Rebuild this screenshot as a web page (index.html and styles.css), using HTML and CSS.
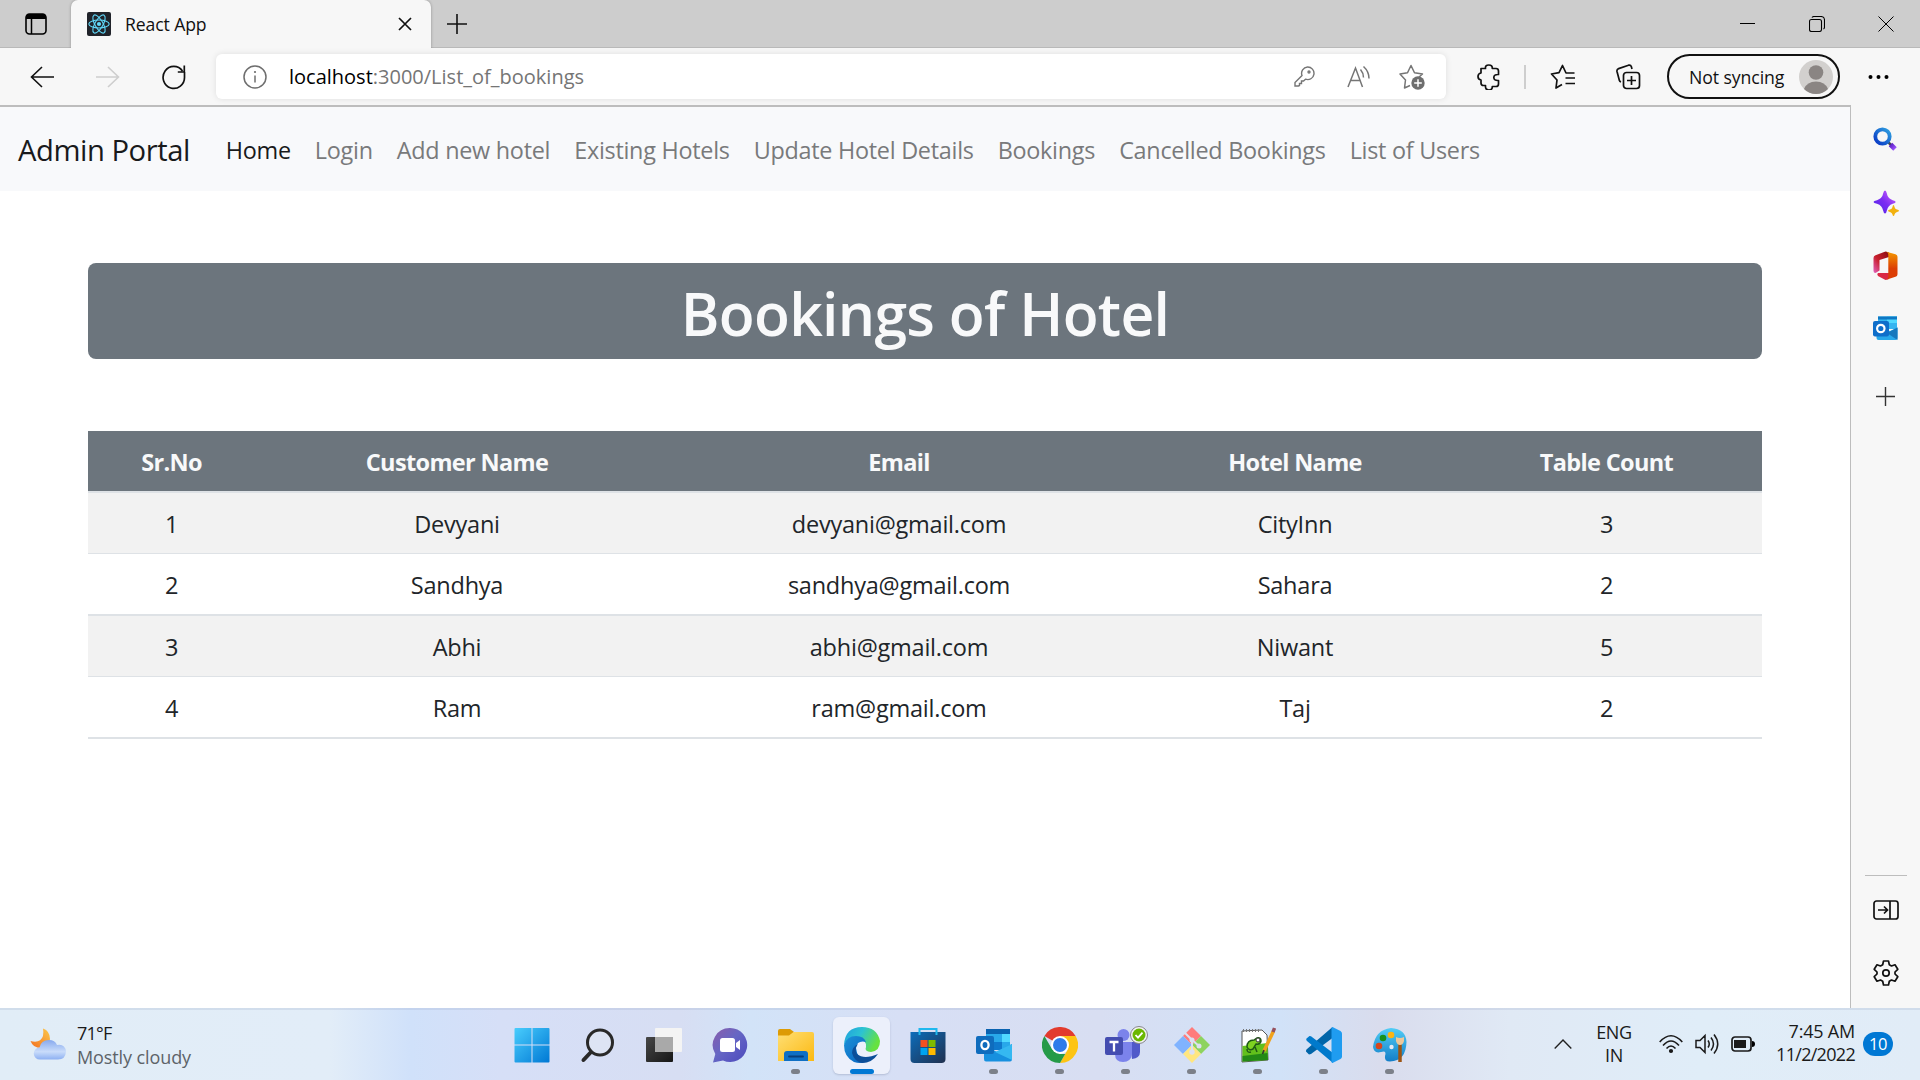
FILE: index.html
```html
<!DOCTYPE html>
<html lang="en">
<head>
<meta charset="utf-8">
<title>React App</title>
<link rel="stylesheet" href="styles.css">
</head>
<body>
<div class="screen">
  <header class="tabstrip">
    <svg class="tab-actions" width="22" height="22" viewBox="0 0 22 22"><rect x="1" y="1" width="20" height="20" rx="3.5" fill="none" stroke="#000" stroke-width="1.6"/><path d="M1 6V4a3 3 0 0 1 3-3h14a3 3 0 0 1 3 3v2z"/><path d="M6.5 6v15" stroke="#000" stroke-width="1.5"/></svg>
    <div class="tab">
      <svg width="24" height="24" viewBox="0 0 24 24"><rect width="24" height="24" rx="2" fill="#20232a"/><g fill="none" stroke="#61dafb" stroke-width="1.1"><ellipse cx="12" cy="12" rx="10.2" ry="4"/><ellipse cx="12" cy="12" rx="10.2" ry="4" transform="rotate(60 12 12)"/><ellipse cx="12" cy="12" rx="10.2" ry="4" transform="rotate(120 12 12)"/></g><circle cx="12" cy="12" r="2.1" fill="#61dafb"/></svg>
      <span class="tab-title">React App</span>
      <svg class="tab-close" width="14" height="14" viewBox="0 0 14 14"><path d="M1 1l12 12M13 1L1 13" stroke="#111" stroke-width="1.7"/></svg>
    </div>
    <svg class="new-tab" width="22" height="22" viewBox="0 0 22 22"><path d="M11 1v20M1 11h20" stroke="#111" stroke-width="1.6"/></svg>
    <div class="window-controls">
      <svg width="16" height="16" viewBox="0 0 16 16"><path d="M0 7.5h15" stroke="#000"/></svg>
      <svg width="16" height="16" viewBox="0 0 16 16"><rect x=".5" y="3.5" width="12" height="12" rx="2" fill="none" stroke="#000" stroke-width="1.1"/><path d="M3 1.5Q3.5.5 5 .5h7q3.500 0 3.500 3.500v7q0 1.500-1 2" fill="none" stroke="#000" stroke-width="1.1"/></svg>
      <svg width="16" height="16" viewBox="0 0 16 16"><path d="M.5.5l15 15M15.500.500l-15 15" stroke="#000"/></svg>
    </div>
  </header>

  <div class="toolbar">
    <svg class="back" width="24" height="24" viewBox="0 0 24 24"><path d="M24 12H1.500M12 2L1.500 12 12 22" fill="none" stroke="#111" stroke-width="1.600"/></svg>
    <svg class="forward" width="24" height="24" viewBox="0 0 24 24"><path d="M0 12h22.500M12 2l10.500 10L12 22" fill="none" stroke="#cecece" stroke-width="1.600"/></svg>
    <svg class="reload" width="24" height="26" viewBox="0 0 24 26"><path d="M22.500 8v5A10.700 11 0 1 1 20.500 7M22.300 1.500v6.500h-6.500" fill="none" stroke="#111" stroke-width="1.700"/></svg>
    <div class="address">
      <svg width="24" height="24" viewBox="0 0 24 24"><circle cx="12" cy="12" r="11" fill="none" stroke="#6e6e6e" stroke-width="1.500"/><path d="M12 10.500v7" stroke="#6e6e6e" stroke-width="1.500"/><circle cx="12" cy="7" r="1.100" fill="#6e6e6e"/></svg>
      <span class="url"><b>localhost</b>:3000/List_of_bookings</span>
      <svg class="key" width="21" height="21" viewBox="0 0 21 21" fill="none" stroke="#757575" stroke-width="1.400"><path d="M13.500 1a6.300 6.300 0 1 1-2 12.200L9.500 15H7.500v2.500H5.500V19.500L4.500 20H1v-3.500l7-7A6.300 6.300 0 0 1 13.500 1z"/><circle cx="15" cy="6" r="1"/></svg>
      <svg class="read" width="24" height="24" viewBox="0 0 24 24" fill="none" stroke="#757575" stroke-width="1.500"><path d="M1 22L8.500 3l7 19M3.500 15.500h10M13.500 4.500q3 3.500 3 8M16.500 1.500q5.500 5 5.500 12"/></svg>
      <svg class="addfav" width="26" height="26" viewBox="0 0 26 26"><path d="M11 21.500L5.500 24l1-8L1 10l7.500-1.200L12 1.500l3.500 7.300L23.500 10 20 13" fill="none" stroke="#757575" stroke-width="1.500" stroke-linejoin="round"/><circle cx="19" cy="19" r="6.700" fill="#6e6e6e"/><path d="M19 15.200v7.600M15.200 19h7.600" stroke="#fff" stroke-width="1.500"/></svg>
    </div>
    <svg class="puzzle" width="24" height="26" viewBox="0 0 24 26"><path d="M4 4.500h4.500Q8 1 11.800 1t3.500 3.500H19q2.500 0 2.500 2.500v3.500q-4.700-.3-4.700 3t4.700 3v3.500q0 2.500-2.500 2.500h-3.700q.2 3.500-3.500 3.500T8.500 21.500H6.500Q4 21.500 4 19v-3Q1 15.500 1 12.500T4 9z" fill="none" stroke="#111" stroke-width="1.700" stroke-linejoin="round"/></svg>
    <i class="separator"></i>
    <svg class="favs" width="26" height="26" viewBox="0 0 26 26"><path d="M12 20.500L6 24l1-8L1.500 10 9 8.700l3.500-7.200L16 9h8.500M15.500 14H25M15.500 19.500H25M25 9" fill="none" stroke="#111" stroke-width="1.700" stroke-linejoin="round"/></svg>
    <svg class="collections" width="25" height="26" viewBox="0 0 25 26" fill="none" stroke="#111" stroke-width="1.700"><path d="M5 18q-1.300-.4-1.600-1.500L1 7.500Q.6 5.300 2.600 4.600L12.500 1.200q2.200-.5 2.800 1.400l.7 2.400"/><rect x="7.500" y="8.500" width="16" height="16" rx="3"/><path d="M15.500 12v9M11 16.500h9"/></svg>
    <div class="profile"><span>Not syncing</span>
      <svg width="34" height="34" viewBox="0 0 34 34"><circle cx="17" cy="17" r="17" fill="#d2d0ce"/><circle cx="17" cy="12.500" r="7.300" fill="#8a8583"/><path d="M5 29Q8 21.500 17 21.500T29 29Q24 34 17 34T5 29z" fill="#8a8583"/></svg>
    </div>
    <svg class="more" width="21" height="6" viewBox="0 0 21 6"><circle cx="2.500" cy="3" r="2"/><circle cx="10.500" cy="3" r="2"/><circle cx="18.500" cy="3" r="2"/></svg>
  </div>

  <div class="workspace">
    <main class="page">
      <nav class="navbar">
        <a class="brand">Admin Portal</a>
        <a class="active">Home</a><a>Login</a><a>Add new hotel</a><a>Existing Hotels</a><a>Update Hotel Details</a><a>Bookings</a><a>Cancelled Bookings</a><a>List of Users</a>
      </nav>
      <section class="container">
        <h1>Bookings of Hotel</h1>
        <table>
          <colgroup><col class="c1"><col class="c2"><col class="c3"><col class="c4"><col class="c5"></colgroup>
          <thead><tr><th>Sr.No</th><th>Customer Name</th><th>Email</th><th>Hotel Name</th><th>Table Count</th></tr></thead>
          <tbody>
            <tr><td>1</td><td>Devyani</td><td>devyani@gmail.com</td><td>CityInn</td><td>3</td></tr>
            <tr><td>2</td><td>Sandhya</td><td>sandhya@gmail.com</td><td>Sahara</td><td>2</td></tr>
            <tr><td>3</td><td>Abhi</td><td>abhi@gmail.com</td><td>Niwant</td><td>5</td></tr>
            <tr><td>4</td><td>Ram</td><td>ram@gmail.com</td><td>Taj</td><td>2</td></tr>
          </tbody>
        </table>
      </section>
    </main>
    <aside class="sidebar">
      <div class="slot"><svg width="25" height="25" viewBox="0 0 25 25"><defs><linearGradient id="lens" x1="0" y1="1" x2="1" y2="0"><stop offset="0" stop-color="#0836c4"/><stop offset="1" stop-color="#2fa0e0"/></linearGradient><linearGradient id="handle" x1="0" y1="0" x2="1" y2="1"><stop offset="0" stop-color="#5a1fc0"/><stop offset="1" stop-color="#9d55ff"/></linearGradient></defs><path d="M15 15l3 3" stroke="#424a55" stroke-width="2.500"/><path d="M17.500 17.500l4.500 4.500" stroke="url(#handle)" stroke-width="5"/><circle cx="9.500" cy="9.500" r="7.200" fill="none" stroke="url(#lens)" stroke-width="3.800"/></svg></div>
      <div class="slot"><svg width="26" height="26" viewBox="0 0 26 26"><defs><linearGradient id="spark" x1="0" y1="1" x2="1" y2="0"><stop offset="0" stop-color="#4a25e8"/><stop offset=".5" stop-color="#7c2cf2"/><stop offset="1" stop-color="#d667ff"/></linearGradient></defs><path d="M12 .5q1.200 0 1.700 2.500 1 5.500 6 7.200 3 .8 3 1.800t-3 1.800q-5 1.700-6 7.200-.5 2.500-1.700 2.500t-1.700-2.500q-1-5.500-6.300-7.200Q.5 13 .5 12t3.500-1.800Q9.300 8.500 10.300 3 10.800.5 12 .5z" fill="url(#spark)"/><path d="M20.500 15q.7 0 1 2 .5 2 2.500 2.500 2 .4 2 1.200t-2 1.300q-2 .5-2.500 2.500-.3 1.500-1 1.500t-1-1.500q-.5-2-2.500-2.500-2-.500-2-1.300t2-1.200q2-.5 2.500-2.500.3-2 1-2z" fill="#f2b10f"/></svg></div>
      <div class="slot"><svg width="25" height="29" viewBox="0 0 25 29"><defs><linearGradient id="of1" x1="0" y1="1" x2="1" y2="0"><stop offset="0" stop-color="#e263c0"/><stop offset=".45" stop-color="#c8202c"/><stop offset="1" stop-color="#870c10"/></linearGradient><linearGradient id="of2" x1="0" y1="0" x2="0" y2="1"><stop offset="0" stop-color="#f59a00"/><stop offset=".6" stop-color="#dc3e05"/></linearGradient></defs><path d="M12.500.5L16 1.500V6L6.500 9v10.500L2.500 22Q.5 22 .5 20V7q0-2 2-2.800z" fill="url(#of1)"/><path d="M5 22h11v6l-3.500 1L5 25Q3.500 23 5 22z" fill="#d92a45"/><path d="M12.500.500l10 2.800q2 .7 2 2.500v17.500q0 2-2 2.500L12.500 29q2.800-1 2.800-3V3Q15.300 1 12.500.500z" fill="url(#of2)"/></svg></div>
      <div class="slot"><svg width="25" height="25" viewBox="0 0 25 25"><path d="M5 .5h19V13H5z" fill="#35b5f0"/><path d="M14 .5h10V7H14z" fill="#50d9ff"/><path d="M5 .5h19v3H5z" fill="#0f78c4"/><path d="M3.500 12L17 15l7.500-3.500V22q0 2-2 2H5.500q-2 0-2-2z" fill="#28a8ea"/><path d="M14 17l10.500-5.500V24z" fill="#1678bd"/><rect x="0" y="5" width="16" height="15.500" rx="2" fill="#0f6fca"/><circle cx="7.800" cy="12.500" r="3.700" fill="none" stroke="#fff" stroke-width="2.200"/></svg></div>
      <div class="slot add"><svg width="19" height="19" viewBox="0 0 19 19"><path d="M9.500 0v19M0 9.500h19" stroke="#333" stroke-width="1.400"/></svg></div>
      <hr>
      <div class="slot"><svg width="26" height="20" viewBox="0 0 26 20" fill="none" stroke="#111" stroke-width="1.700"><rect x="1" y="1" width="24" height="18" rx="2.500"/><path d="M17 1v18M5 10h9M11 6.500l3.500 3.500-3.500 3.500"/></svg></div>
      <div class="slot"><svg width="26" height="26" viewBox="0 0 26 26" fill="none" stroke="#111" stroke-width="1.700" stroke-linejoin="round"><path d="M10.500 1h5l.8 3.800 2.200 1.200L22 4.800l2.800 4.500L22 12v2l2.800 2.700L22 21.200 18.500 20l-2.200 1.200-.8 3.800h-5l-.8-3.800L7.500 20 4 21.200l-2.800-4.500L4 14v-2L1.200 9.300 4 4.800 7.500 6l2.200-1.200z"/><circle cx="13" cy="13" r="3.200"/></svg></div>
    </aside>
  </div>

  <footer class="taskbar">
    <div class="weather">
      <svg width="36" height="32" viewBox="0 0 36 32"><defs><linearGradient id="moon" x1="0" y1="1" x2="1" y2="0"><stop offset="0" stop-color="#f37021"/><stop offset="1" stop-color="#fbc94a"/></linearGradient><linearGradient id="cloud" x1="0" y1="0" x2="0" y2="1"><stop offset="0" stop-color="#87a9ee"/><stop offset=".6" stop-color="#c9dcfa"/><stop offset="1" stop-color="#8db0f2"/></linearGradient></defs><path d="M13 .5Q20 3 20 11q-.5 8-9 9Q3 20 .5 13q10 2.500 12.500-5 .8-3.500 0-7.500z" fill="url(#moon)"/><path d="M10 31.500a6 6 0 0 1-.5-12Q11 12 19 12q6 0 8 5 8-1.500 9 6.500-.5 8-8 8z" fill="url(#cloud)"/></svg>
      <div class="weather-text"><span class="temp">71°F</span><span class="sky">Mostly cloudy</span></div>
    </div>
    <div class="apps">
      <div class="app"><svg width="36" height="36" viewBox="0 0 36 36"><defs><linearGradient id="win" x1="0" y1="0" x2="1" y2="1" gradientUnits="objectBoundingBox"><stop offset="0" stop-color="#49cdfd"/><stop offset="1" stop-color="#0078d4"/></linearGradient></defs><path d="M1.500 1H17.500V17.500H.500V2q0-1 1-1zM18.500 1h16q1 0 1 1v15.500h-17zM.500 18.500h17V35.500h-16q-1 0-1-1zM18.500 18.500h17v16q0 1-1 1h-16z" fill="url(#win)"/></svg></div>
      <div class="app"><svg width="36" height="36" viewBox="0 0 36 36" fill="none" stroke="#292929"><path d="M12 24L3.500 33" stroke-width="4" stroke-linecap="round"/><circle cx="20" cy="15.500" r="12.500" fill="#dde4f4" stroke-width="3"/></svg></div>
      <div class="app"><svg width="36" height="36" viewBox="0 0 36 36"><defs><linearGradient id="tv" x1="0" y1="0" x2="1" y2="1"><stop offset="0" stop-color="#474747"/><stop offset="1" stop-color="#161616"/></linearGradient></defs><rect x="0" y="10" width="27" height="25" rx="1" fill="url(#tv)"/><rect x="9" y="1" width="27" height="24" rx="1" fill="#f4f4f4"/><path d="M9 10h18v15H9z" fill="#a9a9a9"/></svg></div>
      <div class="app"><svg width="36" height="36" viewBox="0 0 36 36"><defs><linearGradient id="chat" x1="0" y1="0" x2="1" y2="1"><stop offset="0" stop-color="#8a5cab"/><stop offset=".45" stop-color="#6667c4"/><stop offset=".7" stop-color="#5a58c2"/><stop offset="1" stop-color="#4b4cb8"/></linearGradient></defs><path d="M18 1a17 17 0 1 1-7 32.400L1 35.500l2.300-8.500A17 17 0 0 1 18 1z" fill="url(#chat)"/><rect x="8" y="11" width="15" height="14" rx="2.500" fill="#fff"/><path d="M24 16l4-3v10l-4-3z" fill="#fff"/></svg></div>
      <div class="app run"><svg width="36" height="36" viewBox="0 0 36 36"><defs><linearGradient id="fold" x1="0" y1="0" x2="1" y2="1"><stop offset="0" stop-color="#ffdf75"/><stop offset="1" stop-color="#fbb912"/></linearGradient></defs><path d="M0 4q0-2 2-2h10l4 3v5H0z" fill="#dd9b05"/><path d="M0 8.500h11L15.500 5H34q2 0 2 2v27H0z" fill="url(#fold)"/><path d="M6 34v-7q0-3 3-3h18q3 0 3 3v7z" fill="#0f6fc4"/><path d="M11 29.500h14" stroke="#083f7b" stroke-width="1.800" stroke-linecap="round"/></svg></div>
      <div class="app run current"><svg width="36" height="36" viewBox="0 0 36 36"><defs><linearGradient id="e1" x1="0" y1="0" x2="1" y2=".4"><stop offset="0" stop-color="#1f9fe0"/><stop offset=".5" stop-color="#2cc3d2"/><stop offset="1" stop-color="#66e240"/></linearGradient><linearGradient id="e2" x1="0" y1="0" x2="1" y2="1"><stop offset="0" stop-color="#1b91d8"/><stop offset="1" stop-color="#0b64c0"/></linearGradient></defs><path d="M0 18Q1 0 18 0q15 0 18 14 0 10-9 11-7-.500-5-5 1-7-8-8Q3 11 0 18z" fill="url(#e1)"/><path d="M0 18Q3 9 12 9q8 0 10 6-9-2-10 6 1 10 10 14-6 2-12 0Q0 30 0 18z" fill="url(#e2)"/><path d="M14 17q-4 5-1 10 7 6 21 0-6 9-16 9-8-2-10-10 0-6 6-9z" fill="#0d4f99"/></svg></div>
      <div class="app"><svg width="36" height="36" viewBox="0 0 36 36"><defs><linearGradient id="store" x1="0" y1="0" x2="1" y2="1"><stop offset="0" stop-color="#0c6dbb"/><stop offset="1" stop-color="#20304f"/></linearGradient></defs><path d="M.500 5h35v27q0 4-4 4h-27q-4 0-4-4z" fill="url(#store)"/><path d="M9.500 8V2h17v6" fill="none" stroke="#1fb8ee" stroke-width="2"/><path d="M10.500 13h7v7h-7z" fill="#f25022"/><path d="M18.500 13h7v7h-7z" fill="#7fba00"/><path d="M10.500 21h7v7h-7z" fill="#00a4ef"/><path d="M18.500 21h7v7h-7z" fill="#ffb900"/></svg></div>
      <div class="app run"><svg width="36" height="36" viewBox="0 0 36 36"><path d="M10 4q0-2 2-2h20q2 0 2 2v18H10z" fill="#28a8ea"/><path d="M10 2h24v5H10z" fill="#0a62b0"/><path d="M26 7h8v8h-8z" fill="#50d9ff"/><path d="M18 15h8v8h-8z" fill="#0f78cc"/><path d="M8 18l13 7 15-8v15q0 2.500-2 2.500H10q-2 0-2-2.500z" fill="#1790df"/><path d="M36 17v16L19 25z" fill="#35b8f1"/><rect y="9" width="18" height="18" rx="2" fill="#0f6cbd"/><ellipse cx="9" cy="18" rx="3.600" ry="4.200" fill="none" stroke="#fff" stroke-width="2.300"/></svg></div>
      <div class="app run"><svg width="36" height="36" viewBox="0 0 36 36"><path d="M18 18L2.400 9A18 18 0 0 1 33.600 9z" fill="#e23b2e"/><path d="M18 9h15.600A18 18 0 0 1 18 36l7.800-13.500z" fill="#fdc413"/><path d="M2.400 9l7.800 13.500L18 27h5.200L18 36A18 18 0 0 1 2.400 9z" fill="#259a48"/><circle cx="18" cy="18" r="9" fill="#fff"/><circle cx="18" cy="18" r="7" fill="#2f7bea"/></svg></div>
      <div class="app run"><svg width="44" height="38" viewBox="0 0 44 38"><circle cx="19.500" cy="9" r="6" fill="#7b83eb"/><circle cx="32" cy="11" r="5" fill="#5059c9"/><path d="M26 16h10v10q0 6-8 7z" fill="#5059c9"/><path d="M11 16h17v12q-1 8-9 8t-8-8z" fill="#7b83eb"/><rect x="1" y="11" width="18" height="18" rx="2" fill="#444db0"/><path d="M5.500 16h9M10 16v9.500" stroke="#fff" stroke-width="2.300"/><circle cx="35" cy="9" r="8.500" fill="#f3f3f3" stroke="#85858a"/><circle cx="35" cy="9" r="6.500" fill="#6bb700"/><path d="M31.500 9l2.500 2.600 4.500-5" fill="none" stroke="#fff" stroke-width="1.800"/></svg></div>
      <div class="app run"><svg width="36" height="36" viewBox="0 0 36 36"><path d="M18 0l9 9-9 9-9-9z" fill="#ff7b7b"/><path d="M9 9l9 9-9 9-9-9z" fill="#80b3ff"/><path d="M27 9l9 9-9 9-9-9z" fill="#8dd35f"/><path d="M18 18l9 9-9 9-9-9z" fill="#ffe680"/><path d="M11 6l7 7v12M18 13l7 6" fill="none" stroke="#dce1f2" stroke-width="2"/><circle cx="18" cy="13" r="2.500" fill="#dce1f2"/><circle cx="25" cy="19" r="2.500" fill="#dce1f2"/><circle cx="18" cy="25" r="2.700" fill="#dce1f2"/></svg></div>
      <div class="app run"><svg width="36" height="36" viewBox="0 0 36 36"><path d="M2 4l20-1 5 5 1 25-26 2z" fill="#fff" stroke="#555"/><path d="M2.500 19l25-3 .5 17-25.500 1.500z" fill="#62c01c"/><path d="M2.500 29l25-3 .5 7-25.500 1.500z" fill="#238a16"/><path d="M3 3.500h18" stroke="#777" stroke-width="3" stroke-dasharray="1 2"/><path d="M7 20q0-7 7-7l3-2q4-1 4 3-1 4-5 3l-3 5q-4 2-6-2zM11 25q-4 1-4-3M15 20l2 5" fill="#7ed321" stroke="#1f5b16" stroke-width="1.500"/><circle cx="18" cy="13" r="2" fill="#fff" stroke="#333"/><path d="M33.500 4L24 24" stroke="#f0a21c" stroke-width="3.500"/><path d="M34.500 1L33 5" stroke="#96505c" stroke-width="3.500"/><path d="M24 23l-1.500 4" stroke="#333" stroke-width="1.500"/></svg></div>
      <div class="app run"><svg width="36" height="36" viewBox="0 0 36 36"><path d="M26.500 0v11L5 27l-2 .5-3-3Q-.2 23 1 22z" fill="#0065a9"/><path d="M1 14q-1.200-1-.500-2.500L3.500 9 5 9.300 27 26v10z" fill="#007acc"/><path d="M26.500 0L34.500 4Q36 5 36 6.500v23q0 1.500-1.500 2.500l-8 4q-1 0-1-1.500v-33q0-1.500 1-1.500z" fill="#1f9cf0"/></svg></div>
      <div class="app run"><svg width="36" height="36" viewBox="0 0 36 36"><defs><linearGradient id="pal" x1="0" y1="0" x2="0" y2="1"><stop offset="0" stop-color="#52cdf6"/><stop offset="1" stop-color="#137ec8"/></linearGradient></defs><path d="M19 1q15 1 15.500 14Q34 34 18 34.500q-6 0-5-5.500 2-6-4-4-7 2-8-5Q3 3 19 1z" fill="url(#pal)"/><circle cx="11" cy="11" r="3.300" fill="#16911d"/><circle cx="19" cy="8" r="3.300" fill="#fcb514"/><circle cx="7" cy="19" r="3.300" fill="#d6451b"/><circle cx="19.500" cy="20" r="2.200" fill="#e4ebf6"/><path d="M28 15v20" stroke="#9c5413" stroke-width="3.500"/><path d="M24 10q4 2 8 0v4q-1 4-4 4t-4-4z" fill="#ecc89c"/></svg></div>
    </div>
    <div class="tray">
      <svg class="chevron" width="18" height="12" viewBox="0 0 18 12"><path d="M.7 10.500L9 2l8.300 8.500" fill="none" stroke="#222" stroke-width="1.400"/></svg>
      <div class="lang"><span>ENG</span><span>IN</span></div>
      <svg class="wifi" width="24" height="20" viewBox="0 0 24 20" fill="none" stroke="#1a1a1a" stroke-width="1.600"><path d="M.7 8q11.300-12.500 22.600 0M4 11.500q8-9 16 0M7.500 14.500q4.500-5 9 0"/><circle cx="12" cy="17" r="1.300" fill="#1a1a1a"/></svg>
      <svg class="speaker" width="24" height="22" viewBox="0 0 24 22" fill="none" stroke="#1a1a1a" stroke-width="1.500"><path d="M1 7.500h4l5-5v17l-5-5H1zM13 7.500q2.500 3.500 0 7M16 4.500q5 6.500 0 13M19 1.500q7.500 9.500 0 19"/></svg>
      <svg class="battery" width="24" height="16" viewBox="0 0 24 16"><rect x="1" y="1" width="19" height="14" rx="3" fill="none" stroke="#1a1a1a" stroke-width="1.700"/><rect x="3" y="4" width="12" height="8" fill="#1a1a1a"/><path d="M21 5q3 0 3 3t-3 3z"/></svg>
      <div class="clock"><span>7:45 AM</span><span class="date">11/2/2022</span></div>
      <span class="badge">10</span>
    </div>
  </footer>
</div>
</body>
</html>
```
FILE: styles.css
```css
* { box-sizing: border-box; }
body { margin: 0; font-family: "Open Sans", "Noto Sans", sans-serif; color: #212529; }
svg { display: block; flex: none; }
.screen { width: 1920px; height: 1080px; display: flex; flex-direction: column; overflow: hidden; background: #fff; }

/* browser chrome */
.tabstrip { height: 48px; flex: none; display: flex; align-items: center; background: #cdcdcd; box-shadow: inset 0 -1px 0 #b9b9b9; }
.tab-actions { margin-left: 25px; }
.tab { display: flex; align-items: center; width: 360px; height: 48px; margin-left: 24px; padding: 0 19px 0 16px; background: #f7f7f7; border-radius: 7px 7px 0 0; box-shadow: 0 0 3px rgba(0, 0, 0, .3); clip-path: inset(0 -4px 0 -4px); }
.tab-title { margin-left: 14px; font-size: 17.600px; letter-spacing: -.1px; color: #111; }
.tab-close { margin-left: auto; }
.new-tab { margin-left: 15px; margin-bottom: 1px; }
.window-controls { display: flex; gap: 53px; margin-left: auto; padding-right: 26px; }
.toolbar { height: 57px; flex: none; display: flex; align-items: center; background: #f7f7f7; }
.back { margin-left: 30px; }
.forward { margin-left: 42px; }
.reload { margin-left: 42px; }
.address { display: flex; align-items: center; width: 1230px; height: 45px; margin-left: 30px; padding: 0 21px 0 27px; background: #fff; border-radius: 6px; box-shadow: 0 0 6px rgba(0, 0, 0, .1); }
.url { margin-left: 22px; font-size: 20px; color: #757575; }
.url b { font-weight: 400; color: #000; }
.key { margin-left: auto; }
.read { margin-left: 32px; }
.addfav { margin-left: 28px; }
.puzzle { margin-left: 31px; }
.separator { width: 2px; height: 30px; margin-left: 23px; height: 24px; background: #cecece; }
.favs { margin-left: 24px; }
.collections { margin-left: 40px; }
.profile { display: flex; align-items: center; justify-content: space-between; width: 173px; height: 45px; margin-left: 26px; padding: 0 5px 0 20px; border: 2px solid #111; border-radius: 23px; font-size: 17.700px; letter-spacing: -.1px; color: #111; }
.more { margin-left: 28px; }

/* page */
.workspace { flex: 1; display: flex; min-height: 0; }
.page { width: 1851px; border-top: 2px solid #bdbdbd; border-right: 1px solid #bdbdbd; }
.navbar { display: flex; align-items: center; gap: 24px; height: 84px; padding: 2px 0 0 18px; background: #f8f9fb; font-size: 23.400px; letter-spacing: -.270px; color: #797a7b; white-space: nowrap; }
.navbar .brand { margin-right: 12px; font-size: 29.200px; letter-spacing: -.450px; color: #191a1b; }
.navbar .active { color: #191a1b; }
.container { padding: 72px 88px 0; }
h1 { height: 96px; margin: 0; padding-top: 4px; border-radius: 8px; background: #6c757d; color: #f8f9fa; font-size: 58.800px; font-weight: 600; line-height: 92px; letter-spacing: -.700px; text-align: center; }
table { width: 1674px; margin-top: 72px; table-layout: fixed; border-collapse: separate; border-spacing: 0; text-align: center; font-size: 23.500px; letter-spacing: -.230px; }
.c1 { width: 167px; }
.c2 { width: 404px; }
.c3 { width: 480px; }
.c4 { width: 312px; }
.c5 { width: 311px; }
th, td { height: 62px; padding: 2px 0 0; line-height: 58px; border-bottom: 2px solid #dee2e6; }
th { background: #6c757d; color: #f8f9fa; font-weight: 700; letter-spacing: -.650px; }
tbody tr:nth-child(odd) td { height: 61px; background: #f2f2f2; border-bottom: 1px solid #dee2e6; }

/* side panel */
.sidebar { flex: 1; display: flex; flex-direction: column; align-items: center; padding: 3px 0 4px; background: #f7f7f7; }
.slot { display: flex; align-items: center; justify-content: center; height: 63px; flex: none; }
.add { margin-top: 5px; }
.sidebar hr { width: 42px; height: 1px; margin: auto 0 2px; border: 0; background: #bdbdbd; }

/* taskbar */
.taskbar { display: grid; grid-template-columns: 499px 924px 1fr; height: 72px; flex: none; font-size: 18px; line-height: 23px; color: #1a1a1a; background: linear-gradient(90deg, #e1edf7 0, #e2edf8 330px, #d0e1fa 410px, #d6dff7 500px, #d7def3 680px, #d2e3f8 750px, #d7dff5 900px, #d8def2 1100px, #d1e2f8 1280px, #d9dced 1380px, #e0e9f5 1510px, #e0edf8 1700px, #e1ecf7 1920px); box-shadow: inset 0 2px 0 rgba(150, 165, 195, .22); }
.weather { display: flex; align-items: center; gap: 11px; padding-left: 30px; }
.weather-text { display: flex; flex-direction: column; line-height: 24px; padding-top: 1px; }
.temp { letter-spacing: -.8px; }
.sky { color: #5d6369; letter-spacing: -.1px; }
.apps { display: flex; }
.app { position: relative; display: flex; align-items: center; justify-content: center; width: 66px; padding-top: 2px; }
.run::after { content: ""; position: absolute; bottom: 6px; left: 28px; width: 9px; height: 5px; border-radius: 3px; background: #7c8089; }
.current::before { content: ""; position: absolute; top: 9px; left: 4px; width: 57px; height: 57px; border-radius: 6px; background: #ecf0fb; box-shadow: 0 1px 2px rgba(100, 110, 140, .3); }
.current svg { position: relative; }
.current::after { left: 21px; width: 24px; background: #0078d4; }
.tray { display: flex; align-items: center; padding-left: 131px; }
.lang { display: flex; flex-direction: column; align-items: center; width: 36px; margin-left: 24px; }
.lang span { letter-spacing: -.4px; }
.wifi { margin-left: 27px; }
.speaker { margin-left: 12px; }
.battery { margin-left: 12px; }
.clock { display: flex; flex-direction: column; align-items: flex-end; width: 80px; margin-left: 20px; padding-bottom: 2px; }
.clock span { letter-spacing: -.2px; }
.clock .date { letter-spacing: -.700px; }
.badge { width: 30px; height: 24px; margin-left: 8px; border-radius: 12px; background: #0078d4; color: #fff; font-size: 16.500px; line-height: 23px; text-align: center; letter-spacing: -.5px; }
```
